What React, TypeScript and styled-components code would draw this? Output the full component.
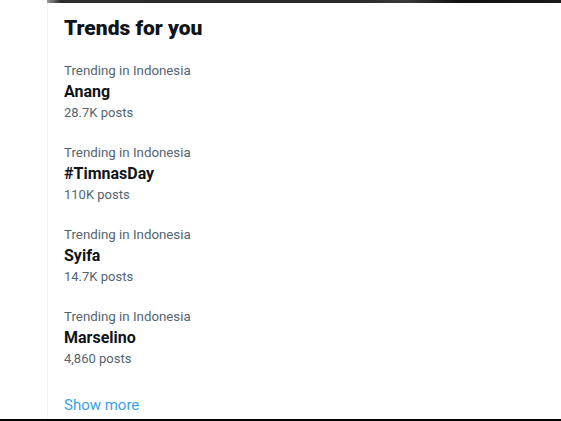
import React from "react";
import styled, { createGlobalStyle } from "styled-components";

const Global = createGlobalStyle`
  html, body { margin: 0; padding: 0; background: #ffffff; }
  body { font-family: Roboto, "Liberation Sans", Arial, sans-serif; }
`;

const Page = styled.div`
  width: 561px;
  height: 421px;
  display: flex;
  flex-direction: column;
  overflow: hidden;
  background: #ffffff;
`;

const Main = styled.div`
  flex: 1;
  display: flex;
  min-height: 0;
`;

const Gutter = styled.div`
  width: 47px;
  flex: none;
`;

const Column = styled.div`
  flex: 1;
  display: flex;
  flex-direction: column;
  min-width: 0;
`;

const TopStrip = styled.div`
  height: 3px;
  flex: none;
  background: linear-gradient(90deg, #9a9a9a 0px, #2c2c2c 14px, #2a2a2a 60%, #3a3a3a 70%, #111 80%, #1a1a1a 100%);
`;

const Panel = styled.section`
  flex: 1;
  border-left: 1px solid #eff3f4;
  display: flex;
  flex-direction: column;
`;

const Header = styled.h2`
  margin: 0;
  padding: 13px 16px 11px;
  font-size: 21px;
  line-height: 24px;
  font-weight: 900;
  color: #0f1419;
`;

const Trend = styled.div`
  padding: 12px 16px;
  display: flex;
  flex-direction: column;
`;

const Meta = styled.span`
  font-size: 13.3px;
  line-height: 16px;
  color: #536471;
`;

const Name = styled.span`
  margin-top: 3px;
  font-size: 16px;
  line-height: 20px;
  font-weight: 700;
  color: #0f1419;
`;

const Count = styled.span`
  margin-top: 3px;
  font-size: 13px;
  line-height: 16px;
  color: #536471;
`;

const ShowMore = styled.a`
  padding: 16px 16px 0;
  font-size: 15px;
  line-height: 20px;
  color: #3a9fec;
  text-decoration: none;
`;

const BottomLine = styled.div`
  height: 2px;
  flex: none;
  background: #000000;
`;

const trends = [
  { name: "Anang", posts: "28.7K posts" },
  { name: "#TimnasDay", posts: "110K posts" },
  { name: "Syifa", posts: "14.7K posts" },
  { name: "Marselino", posts: "4,860 posts" },
];

export default function App() {
  return (
    <>
      <Global />
      <Page>
        <Main>
          <Gutter />
          <Column>
            <TopStrip />
            <Panel>
              <Header>Trends for you</Header>
              {trends.map((t) => (
                <Trend key={t.name}>
                  <Meta>Trending in Indonesia</Meta>
                  <Name>{t.name}</Name>
                  <Count>{t.posts}</Count>
                </Trend>
              ))}
              <ShowMore href="#">Show more</ShowMore>
            </Panel>
          </Column>
        </Main>
        <BottomLine />
      </Page>
    </>
  );
}
